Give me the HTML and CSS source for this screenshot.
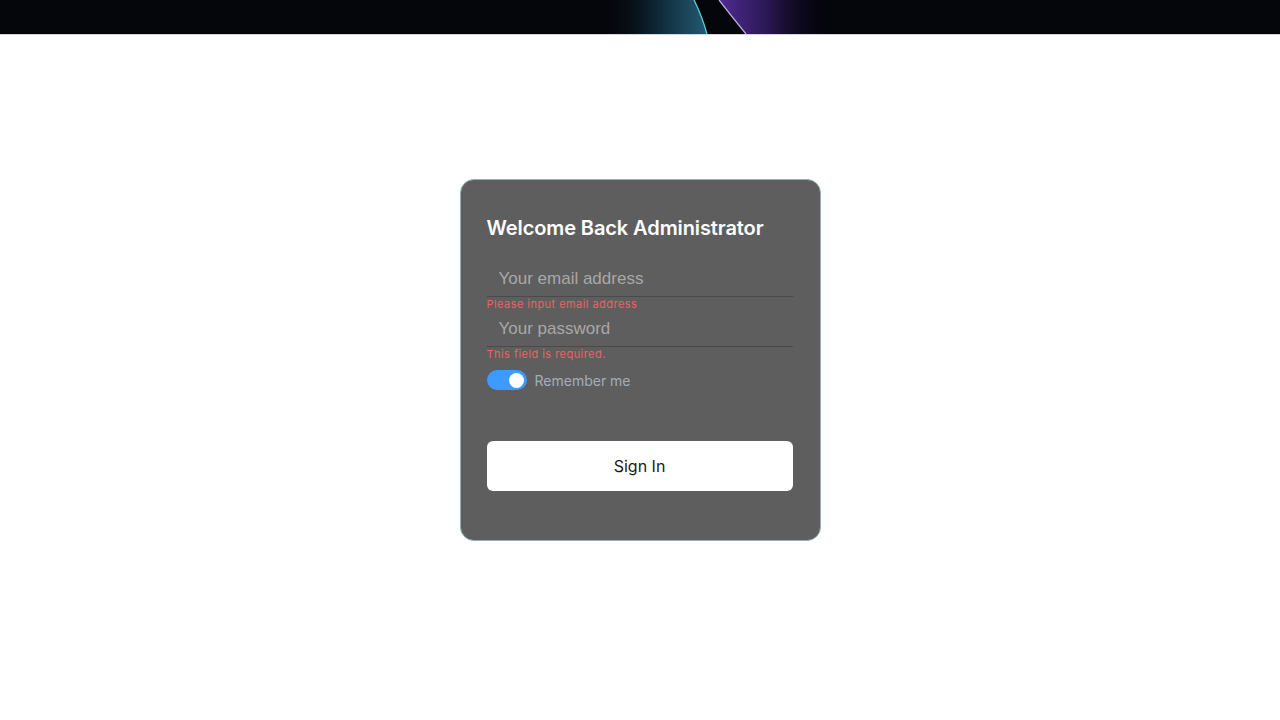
FILE: index.html
```html
<!DOCTYPE html>
<html lang="en">
<head>
<meta charset="utf-8">
<title>Sign In</title>
<link rel="stylesheet" href="styles.css">
</head>
<body>
<header class="topbar">
  <svg class="topbar-art" width="1280" height="34" viewBox="0 0 1280 34" preserveAspectRatio="none">
    <defs>
      <linearGradient id="teal" x1="0" y1="0" x2="1" y2="0">
        <stop offset="0" stop-color="#05060c" stop-opacity="0"/>
        <stop offset="0.55" stop-color="#0f2a38"/>
        <stop offset="1" stop-color="#235a72"/>
      </linearGradient>
      <linearGradient id="purple" x1="0" y1="0" x2="1" y2="0">
        <stop offset="0" stop-color="#4f2c92"/>
        <stop offset="0.45" stop-color="#2a1652"/>
        <stop offset="1" stop-color="#05050c" stop-opacity="0"/>
      </linearGradient>
    </defs>
    <path d="M600 0 L694 0 Q702 16 707 34 L600 34 Z" fill="url(#teal)"/>
    <path d="M694 0 Q702 16 707 34" fill="none" stroke="#58d0cf" stroke-width="1.3"/>
    <path d="M719 0 Q733 18 746 34 L830 34 L830 0 Z" fill="url(#purple)"/>
    <path d="M719 0 Q733 18 746 34" fill="none" stroke="#b7a8dc" stroke-width="1.3"/>
  </svg>
</header>
<main class="page">
  <form class="card" onsubmit="return false">
    <h1 class="card-title">Welcome Back Administrator</h1>
    <div class="field">
      <input class="field-input" type="email" placeholder="Your email address">
    </div>
    <div class="field-error">Please input email address</div>
    <div class="field">
      <input class="field-input" type="password" placeholder="Your password">
    </div>
    <div class="field-error">This field is required.</div>
    <label class="remember">
      <span class="switch"><span class="switch-knob"></span></span>
      <span class="remember-label">Remember me</span>
    </label>
    <button class="submit" type="submit">Sign In</button>
  </form>
</main>
</body>
</html>
```
FILE: styles.css
```css
* { box-sizing: border-box; }
html, body { margin: 0; padding: 0; background: #ffffff; }
body { font-family: "Inter", "Liberation Sans", sans-serif; }

.topbar {
  height: 35px;
  background: #05050c;
  border-bottom: 1px solid #d4d4d8;
  overflow: hidden;
}
.topbar-art { display: block; }

.page {
  display: flex;
  justify-content: center;
  padding-top: 144px;
}

.card {
  width: 361px;
  background: #5e5e5e;
  border: 1px solid #95aeb0;
  border-radius: 14px;
  padding: 36px 27px 49px 26px;
  display: flex;
  flex-direction: column;
}

.card-title {
  margin: 0 0 21px;
  font-size: 20px;
  line-height: 24px;
  font-weight: 600;
  color: #ffffff;
  letter-spacing: -0.1px;
}

.field {
  height: 36px;
  border-bottom: 1px solid #4a4a4a;
  display: flex;
}
.field-input {
  flex: 1;
  border: 0;
  outline: none;
  background: transparent;
  padding: 1px 12px 0;
  font-family: "Liberation Sans", Arial, sans-serif;
  font-size: 17px;
  color: #eeeeee;
}
.field-input::placeholder { color: #a8a8a8; opacity: 1; }

.field-error {
  font-size: 11px;
  line-height: 13px;
  color: #e76565;
  letter-spacing: 0.45px;
  padding-top: 1px;
}

.remember {
  display: flex;
  align-items: center;
  gap: 8px;
  margin-top: 9px;
}
.switch {
  width: 40px;
  height: 20px;
  border-radius: 10px;
  background: #3d9bff;
  display: flex;
  align-items: center;
  justify-content: flex-end;
  padding-right: 3px;
}
.switch-knob {
  width: 15px;
  height: 15px;
  border-radius: 50%;
  background: #ffffff;
}
.remember-label {
  font-size: 14px;
  color: #a3adba;
}

.submit {
  margin-top: 51px;
  height: 50px;
  border: 0;
  border-radius: 6px;
  background: #ffffff;
  font-family: "Inter", "Liberation Sans", sans-serif;
  font-size: 16px;
  color: #1a1a1a;
  cursor: pointer;
}
```
